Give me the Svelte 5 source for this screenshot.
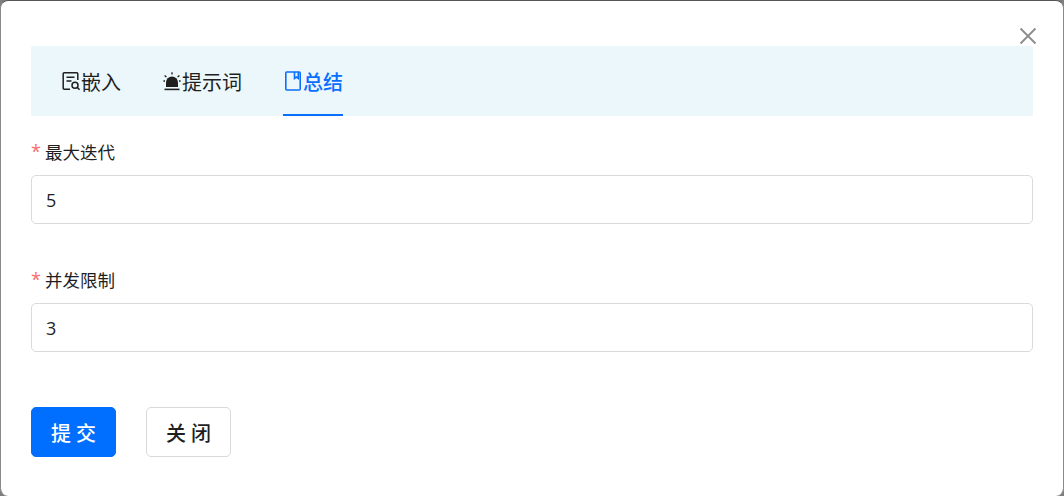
<script>
  let tabs = [
    { name: "嵌入", icon: "embed" },
    { name: "提示词", icon: "alarm" },
    { name: "总结", icon: "book", active: true }
  ];
  let fields = [
    { label: "最大迭代", value: "5" },
    { label: "并发限制", value: "3" }
  ];
</script>

<div class="backdrop">
  <div class="modal">
    <button class="close" aria-label="关闭">
      <svg width="18" height="18" viewBox="0 0 18 18" fill="none" stroke="#8c8c8c" stroke-width="1.8">
        <path d="M1.5 1.5 16.5 16.5M16.5 1.5 1.5 16.5" />
      </svg>
    </button>

    <div class="tabs">
      {#each tabs as tab}
        <div class="tab" class:active={tab.active}>
          {#if tab.icon == "embed"}
            <svg width="20" height="20" viewBox="0 0 20 20" fill="none" stroke="currentColor" stroke-width="1.5">
              <path d="M9 18.2H3.2a1 1 0 0 1-1-1V2.8a1 1 0 0 1 1-1h12.6a1 1 0 0 1 1 1V9" />
              <path d="M5.5 6.2h8M5.5 10h5" />
              <circle cx="14" cy="14.2" r="3" />
              <path d="M16.2 16.4 18.6 18.8" />
            </svg>
          {:else if tab.icon == "alarm"}
            <svg width="20" height="20" viewBox="0 0 20 20" fill="currentColor">
              <path d="M4 16V11.5a6 6 0 0 1 12 0V16Z" />
              <rect x="2.5" y="17.6" width="15" height="1.6" />
              <path d="M10 1.2v2.4M2.6 4.4 4.4 6M17.4 4.4 15.6 6M1.4 10h1.6M17 10h1.6" stroke="currentColor" stroke-width="1.3" />
            </svg>
          {:else}
            <svg width="20" height="20" viewBox="0 0 20 20" fill="none" stroke="currentColor" stroke-width="1.6">
              <rect x="2.8" y="1" width="14.4" height="18" rx="1" />
              <path d="M11.5 1v6.5l1.9-1.4 1.9 1.4V1" />
            </svg>
          {/if}
          <span>{tab.name}</span>
        </div>
      {/each}
    </div>

    <form class="form">
      {#each fields as field}
        <div class="item">
          <div class="label"><i>*</i>{field.label}</div>
          <input class="input" value={field.value} />
        </div>
      {/each}
      <div class="actions">
        <button type="button" class="btn primary">提 交</button>
        <button type="button" class="btn">关 闭</button>
      </div>
    </form>
  </div>
</div>

<style>
  :global(body) {
    margin: 0;
  }
  .backdrop {
    width: 1064px;
    height: 496px;
    background: #7f7f7f;
    overflow: hidden;
  }
  .modal {
    position: relative;
    box-sizing: border-box;
    height: 496px;
    padding: 45px 30px 0 30px;
    background: #fff;
    border-top: 1px solid #555;
    border-left: 1px solid #8a8a8a;
    border-right: 1px solid #8a8a8a;
    border-radius: 8px;
    font-family: "Open Sans", "Noto Sans CJK SC", sans-serif;
    color: #1f1f1f;
  }
  .close {
    position: absolute;
    top: 26px;
    right: 26px;
    padding: 0;
    width: 18px;
    height: 18px;
    border: 0;
    background: none;
  }
  .close svg {
    display: block;
  }
  .tabs {
    display: flex;
    gap: 41px;
    height: 70px;
    padding-left: 30px;
    background: #ebf7fa;
    border-radius: 2px;
  }
  .tab {
    display: flex;
    align-items: center;
    box-sizing: border-box;
    height: 70px;
    font-size: 20px;
    color: #1f1f1f;
  }
  .tab.active {
    color: #0a6fff;
    font-weight: 500;
    border-bottom: 2px solid #0a6fff;
    padding-top: 2px;
  }
  .form {
    display: flex;
    flex-direction: column;
  }
  .item {
    height: 128px;
    padding-top: 22px;
    box-sizing: border-box;
  }
  .label {
    display: flex;
    align-items: center;
    height: 26px;
    font-size: 17.5px;
    margin-bottom: 11px;
  }
  .label i {
    width: 14px;
    font-style: normal;
    font-size: 18px;
    color: #ff6b6b;
  }
  .input {
    display: block;
    box-sizing: border-box;
    width: 100%;
    height: 49px;
    padding: 0 14px;
    border: 1px solid #d9d9d9;
    border-radius: 5px;
    font-family: inherit;
    font-size: 18px;
    color: #1f1f1f;
    outline: none;
  }
  .actions {
    display: flex;
    gap: 30px;
    padding-top: 35px;
  }
  .btn {
    width: 85px;
    height: 50px;
    padding: 0;
    border: 1px solid #d9d9d9;
    border-radius: 5px;
    background: #fff;
    font-family: inherit;
    font-size: 20px;
    font-weight: 500;
    color: #1f1f1f;
  }
  .btn.primary {
    background: #006eff;
    border-color: #006eff;
    color: #fff;
  }
</style>
